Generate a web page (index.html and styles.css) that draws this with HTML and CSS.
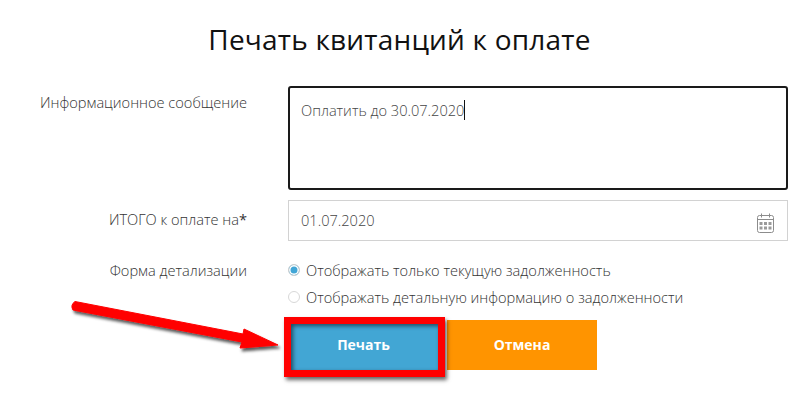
FILE: index.html
```html
<!DOCTYPE html>
<html lang="ru">
<head>
<meta charset="utf-8">
<title>Печать квитанций к оплате</title>
<link rel="stylesheet" href="styles.css">
</head>
<body>
<main class="page">
  <h1 class="title">Печать квитанций к оплате</h1>
  <form class="form">
    <div class="row row-message">
      <div class="label">Информационное сообщение</div>
      <div class="textarea"><span>Оплатить до 30.07.2020</span><i class="caret"></i></div>
    </div>
    <div class="row row-date">
      <div class="label">ИТОГО к оплате на<span class="req">*</span></div>
      <div class="input">
        <span>01.07.2020</span>
        <svg class="cal" width="17" height="20" viewBox="0 0 17 20" fill="none" stroke="#8c8c8c" stroke-width="1">
          <rect x="0.5" y="2.5" width="16" height="17" rx="2"/>
          <path d="M0.5 6.5H16.5M4.5 0.5V4.5M12.5 0.5V4.5"/>
          <path d="M2.5 9h3v3h-3zM7 9h3v3H7zM11.5 9h3v3h-3zM2.5 13.5h3v3h-3zM7 13.5h3v3H7zM11.5 13.5h3v3h-3z" fill="#9a9a9a" stroke="none"/>
        </svg>
      </div>
    </div>
    <div class="row row-radio">
      <div class="label">Форма детализации</div>
      <div class="radios">
        <div class="radio"><i class="dot on"></i><span>Отображать только текущую задолженность</span></div>
        <div class="radio"><i class="dot"></i><span>Отображать детальную информацию о задолженности</span></div>
      </div>
    </div>
    <div class="row row-actions">
      <div></div>
      <div class="actions">
        <div class="btn btn-print">Печать</div>
        <div class="btn btn-cancel">Отмена</div>
      </div>
    </div>
  </form>
</main>
<div class="highlight"></div>
<svg class="arrow" width="300" height="120" viewBox="0 0 300 120">
  <defs>
    <filter id="sh" x="-10%" y="-30%" width="120%" height="170%">
      <feDropShadow dx="2" dy="3" stdDeviation="1.5" flood-color="#000" flood-opacity="0.65"/>
    </filter>
  </defs>
  <path filter="url(#sh)" fill="#f00" stroke="#f00" stroke-linejoin="round" d="M75 21.5 L243 54 L244 49 L278 65 L240 68 L242 62 L73 30 Q70 25 75 21.5Z"/>
</svg>
</body>
</html>
```
FILE: styles.css
```css
* { box-sizing: border-box; }
html, body { margin: 0; padding: 0; background: #fff; }
body {
  width: 799px;
  height: 400px;
  overflow: hidden;
  position: relative;
  font-family: "Open Sans", sans-serif;
  font-weight: 300;
  font-size: 14.6px;
  color: #333;
}
.title {
  margin: 0;
  padding-top: 21px;
  height: 86px;
  text-align: center;
  font-size: 28px;
  line-height: 36px;
  font-weight: 400;
  letter-spacing: 0.2px;
  color: #111;
}
.row { display: grid; grid-template-columns: 247px 500px; column-gap: 41px; }
.label { text-align: right; line-height: 20px; color: #333; }
.row-message { height: 114px; }
.row-message .label { padding-top: 6px; }
.textarea {
  height: 104px;
  border: 2px solid #1a1a1a;
  border-radius: 3px;
  padding: 12px 11px;
  line-height: 20px;
  color: #444;
  display: flex;
  align-items: flex-start;
}
.caret { width: 1px; height: 20px; background: #111; }
.row-date { height: 60px; }
.row-date .label { padding-top: 9px; }
.req { font-weight: 400; }
.input {
  height: 41px;
  border: 1px solid #d2d2d2;
  padding: 0 13px 0 12px;
  display: flex;
  align-items: center;
  justify-content: space-between;
  color: #444;
}
.input span { position: relative; top: -1px; }
.cal { margin-top: 5px; }
.row-radio { height: 60px; }
.radios { display: flex; flex-direction: column; gap: 7px; }
.radio { display: flex; align-items: center; gap: 6px; height: 20px; color: #333; }
.dot {
  width: 12px; height: 12px; border-radius: 50%;
  border: 1px solid #d8d8d8; background: #fff;
  flex: none;
}
.dot.on { background: #41a6d6; box-shadow: inset 0 0 0 1.5px #fff; border-color: #cfcfcf; }
.actions { display: flex; margin-left: 2px; column-gap: 9px; }
.btn {
  height: 50px;
  display: flex; align-items: center; justify-content: center;
  color: #fff; font-weight: 700; font-size: 14px;
  padding-bottom: 1px;
}
.btn-print { width: 148px; background: #42a6d4; padding-right: 1px; }
.btn-cancel { width: 150px; background: #ff9400; }
.highlight {
  position: absolute;
  left: 284px; top: 317px;
  width: 161px; height: 60px;
  border: 7px solid #f00;
  box-shadow: 2px 3px 4px rgba(0,0,0,.6), inset 2px 2px 4px rgba(0,0,0,.55);
}
.arrow { position: absolute; left: 0; top: 280px; }
```
